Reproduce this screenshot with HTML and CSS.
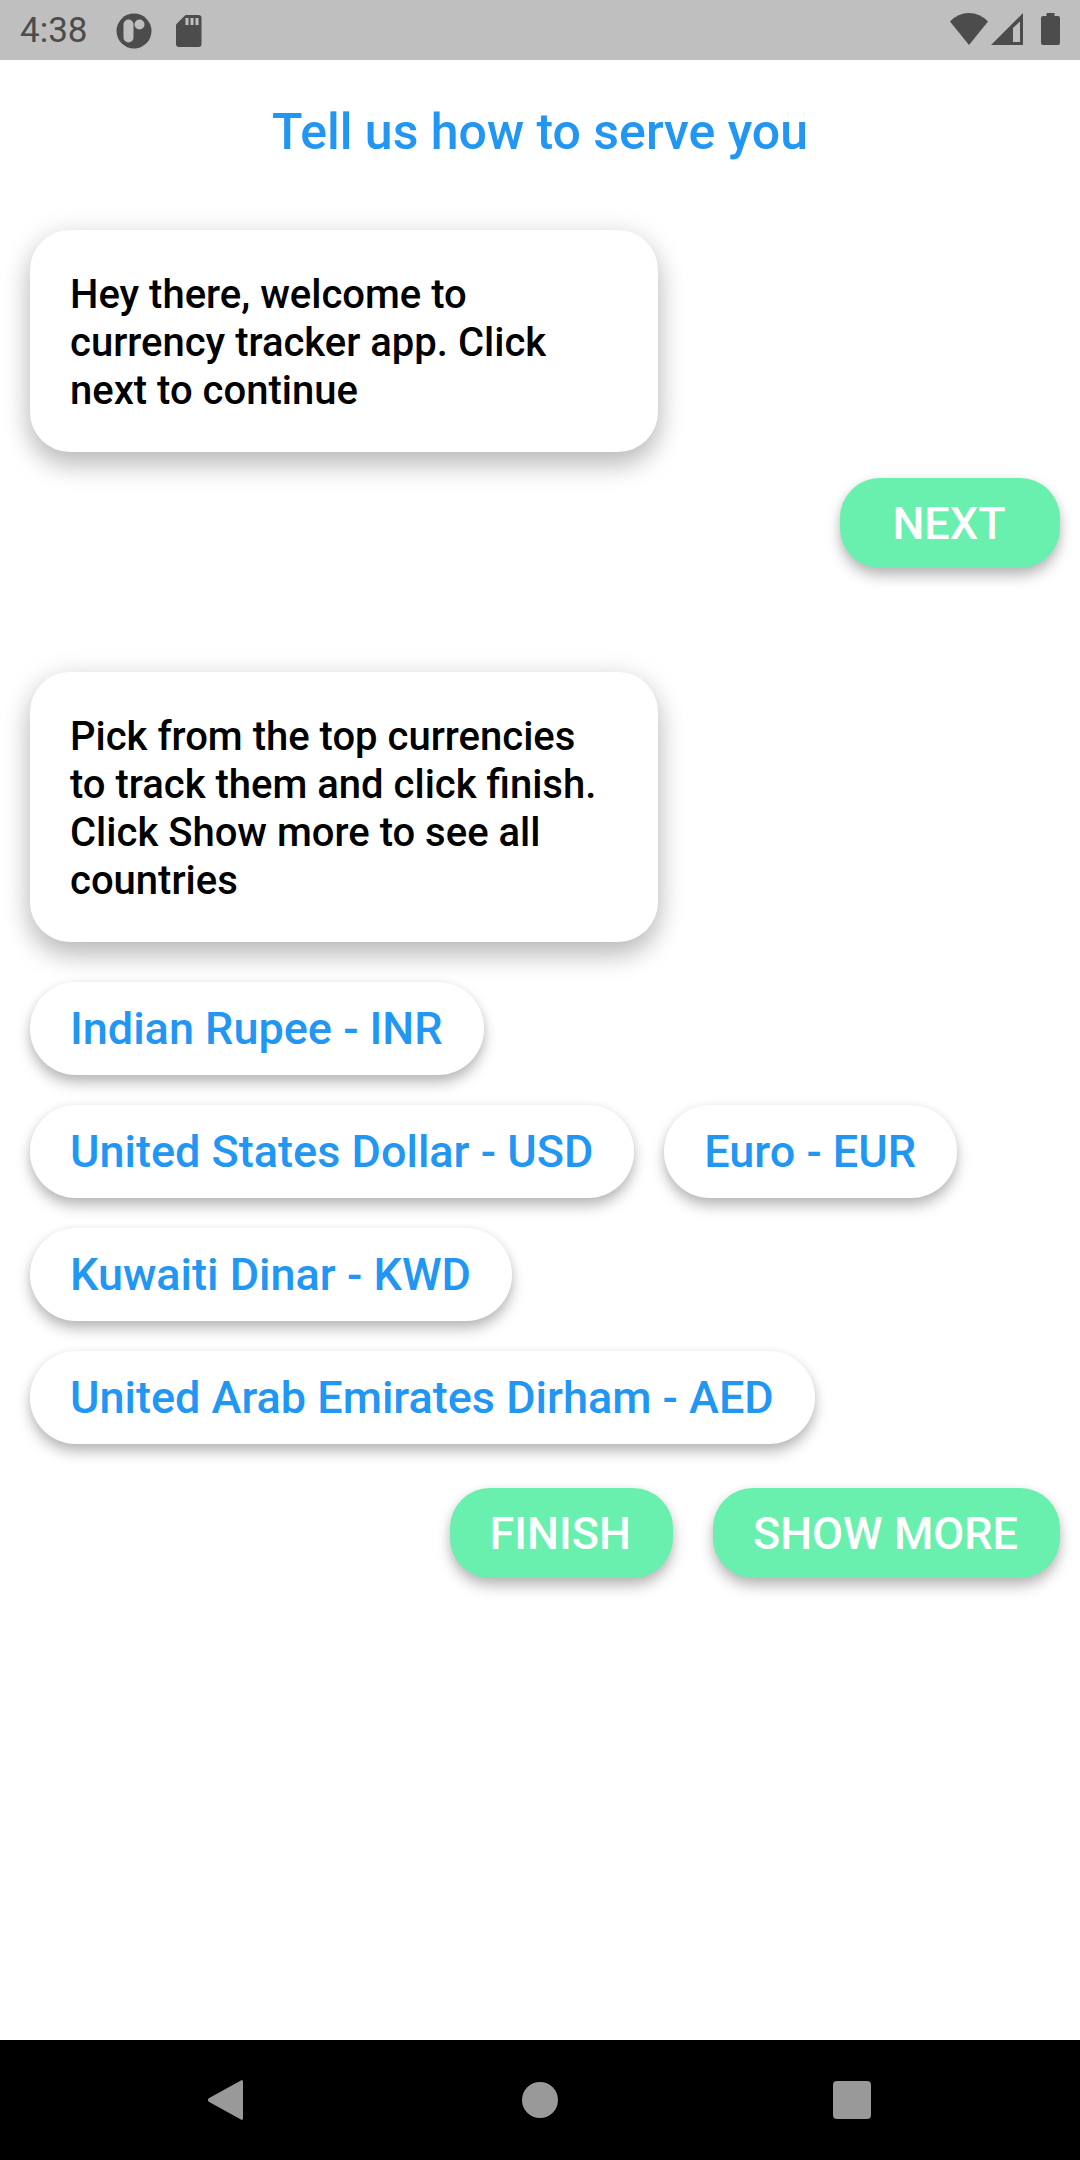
FILE: index.html
```html
<!DOCTYPE html>
<html lang="en">
<head>
<meta charset="utf-8">
<meta name="viewport" content="width=device-width, initial-scale=1">
<title>Currency tracker</title>
<link rel="stylesheet" href="styles.css">
</head>
<body>
<div class="screen">
  <header class="status-bar">
    <div class="status-left">
      <time class="clock">4:38</time>
      <svg class="status-icon" viewBox="0 0 36 36" aria-hidden="true">
        <circle cx="18" cy="18" r="17.5"/>
        <rect class="cutout" x="7.5" y="6.5" width="10" height="23" rx="5"/>
        <circle class="cutout" cx="23.5" cy="11.5" r="5"/>
      </svg>
      <svg class="status-icon" viewBox="0 0 36 36" aria-hidden="true">
        <path d="M14.500 2H27.500Q30.500 2 30.500 5V31Q30.500 34 27.500 34H8Q5 34 5 31V11.500Z"/>
        <path class="cutout" d="M14.500 5h3v7h-3zM19.500 5h3v7h-3zM24.500 5h3v7h-3z"/>
      </svg>
    </div>
    <div class="status-right">
      <svg class="wifi" viewBox="0 0 38 32" aria-hidden="true"><path d="M0 8.500Q8 0 19 0T38 8.500L19 32Z"/></svg>
      <svg class="signal" viewBox="0 0 32 32" aria-hidden="true"><path fill-rule="evenodd" d="M32 0V32H0ZM29 8.500L22 15V29H29Z"/></svg>
      <svg class="battery" viewBox="0 0 19 32" aria-hidden="true"><path d="M5.500 0H13.500V3H17Q19 3 19 5V30Q19 32 17 32H2Q0 32 0 30V5Q0 3 2 3H5.500Z"/></svg>
    </div>
  </header>

  <main class="content">
    <h1 class="title">Tell us how to serve you</h1>

    <section class="step">
      <p class="bubble">Hey there, welcome to currency tracker app. Click next to continue</p>
      <div class="actions">
        <button class="action" type="button">NEXT</button>
      </div>
    </section>

    <section class="step">
      <p class="bubble">Pick from the top currencies to track them and click finish. Click Show more to see all countries</p>
      <div class="chips">
        <button class="chip" type="button">Indian Rupee - INR</button>
        <button class="chip" type="button">United States Dollar - USD</button>
        <button class="chip" type="button">Euro - EUR</button>
        <button class="chip" type="button">Kuwaiti Dinar - KWD</button>
        <button class="chip" type="button">United Arab Emirates Dirham - AED</button>
      </div>
      <div class="actions">
        <button class="action" type="button">FINISH</button>
        <button class="action" type="button">SHOW MORE</button>
      </div>
    </section>
  </main>

  <nav class="nav-bar" aria-label="System navigation">
    <button class="nav-button" type="button" aria-label="Back">
      <svg viewBox="0 0 40 40" aria-hidden="true"><path d="M35 2V38Q35 41 32.500 39.300L.8 21.800Q-1 20 .8 18.200L32.500 .7Q35-1 35 2Z"/></svg>
    </button>
    <button class="nav-button" type="button" aria-label="Home">
      <svg viewBox="0 0 40 40" aria-hidden="true"><circle cx="20" cy="20" r="18"/></svg>
    </button>
    <button class="nav-button" type="button" aria-label="Recent apps">
      <svg viewBox="0 0 40 40" aria-hidden="true"><rect x="1" y="1" width="38" height="38" rx="4"/></svg>
    </button>
  </nav>
</div>
</body>
</html>
```
FILE: styles.css
```css
* {
  box-sizing: border-box;
}

body {
  margin: 0;
  background: #fff;
  font-family: Roboto, "Liberation Sans", sans-serif;
}

button {
  border: 0;
  font: inherit;
  cursor: pointer;
}

.screen {
  display: flex;
  flex-direction: column;
  min-height: 100vh;
}

/* Status bar */
.status-bar {
  display: flex;
  justify-content: space-between;
  align-items: center;
  height: 60px;
  padding: 0 20px;
  background: #bfbfbf;
  color: #4c4c4c;
}

.status-left,
.status-right {
  display: flex;
  align-items: center;
}

.status-left {
  gap: 19px;
  padding-top: 2px;
}

.status-right {
  padding-bottom: 2px;
}

.clock {
  margin-right: 9px;
  font-size: 35px;
  line-height: 40px;
}

.status-bar svg {
  fill: #4c4c4c;
}

.status-bar .cutout {
  fill: #bfbfbf;
}

.status-icon {
  width: 36px;
  height: 36px;
}

.wifi {
  width: 38px;
  height: 32px;
}

.signal {
  width: 32px;
  height: 32px;
  margin: 0 18px 0 3px;
}

.battery {
  width: 19px;
  height: 32px;
}

/* Conversation */
.content {
  flex: 1;
}

.title {
  margin: 42px 0 68px;
  color: #2196f3;
  font-size: 50px;
  font-weight: 500;
  line-height: 60px;
  text-align: center;
}

.step {
  margin-bottom: 104px;
}

.bubble {
  width: calc(60% - 20px);
  margin: 0 0 0 30px;
  padding: 41px 40px 37px;
  border-radius: 40px;
  background: #fff;
  box-shadow: 0 14px 26px rgba(0, 0, 0, 0.22), 0 2px 30px rgba(0, 0, 0, 0.1);
  color: #000;
  font-size: 40px;
  font-weight: 500;
  line-height: 48px;
}

.chips {
  display: flex;
  flex-wrap: wrap;
  gap: 30px;
  margin: 40px 30px 18px;
}

.chip,
.action {
  font-size: 45px;
  font-weight: 500;
}

.chip {
  height: 93px;
  padding: 0 41px 0 40px;
  border-radius: 46px;
  background: #fff;
  box-shadow: 0 8px 14px rgba(0, 0, 0, 0.26), 0 1px 8px rgba(0, 0, 0, 0.06);
  color: #2196f3;
}

.actions {
  display: flex;
  justify-content: flex-end;
  gap: 40px;
  padding: 26px 20px 0;
}

.action {
  min-width: 220px;
  height: 90px;
  padding: 0 42px 0 40px;
  border-radius: 40px;
  background: #69f0ae;
  box-shadow: 0 8px 14px rgba(0, 0, 0, 0.26), 0 1px 8px rgba(0, 0, 0, 0.06);
  color: #fff;
}

/* System navigation */
.nav-bar {
  display: flex;
  justify-content: center;
  gap: 272px;
  height: 120px;
  background: #000;
}

.nav-button {
  display: flex;
  align-items: center;
  padding: 0;
  background: none;
}

.nav-button svg {
  width: 40px;
  height: 40px;
  fill: #999;
}
```
